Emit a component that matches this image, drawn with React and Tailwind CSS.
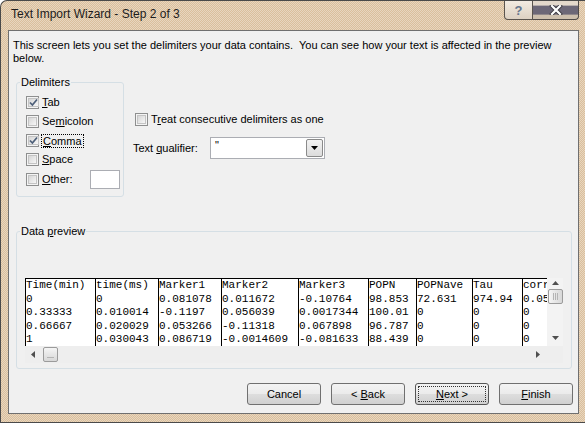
import React from "react";

// dithered tan window frame, like the basic theme
const frame =
  "bg-[#e0c8a8] bg-[repeating-conic-gradient(#dabf9c_0%_25%,#e8d6bf_0%_50%)] bg-[length:2px_2px]";

const columns = [
  { w: "w-[70px]", cells: ["Time(min)", "0", "0.33333", "0.66667", "1"] },
  { w: "w-[63px]", cells: ["time(ms)", "0", "0.010014", "0.020029", "0.030043"] },
  { w: "w-[63px]", cells: ["Marker1", "0.081078", "-0.1197", "0.053266", "0.086719"] },
  { w: "w-[77px]", cells: ["Marker2", "0.011672", "0.056039", "-0.11318", "-0.0014609"] },
  { w: "w-[70px]", cells: ["Marker3", "-0.10764", "0.0017344", "0.067898", "-0.081633"] },
  { w: "w-[48px]", cells: ["POPN", "98.853", "100.01", "96.787", "88.439"] },
  { w: "w-[56px]", cells: ["POPNave", "72.631", "0", "0", "0"] },
  { w: "w-[50px]", cells: ["Tau", "974.94", "0", "0", "0"] },
  { w: "w-[25px]", cells: ["corr", "0.05", "0", "0", "0"] },
];

const CheckBox = ({ checked }) => (
  <span className="w-[13px] h-[13px] shrink-0 border border-[#8e8f8f] bg-[#f4f4f4] p-[1px] flex">
    <span className="flex-1 border border-[#c4c4c4] bg-[linear-gradient(135deg,#d6d6d6,#f7f7f7)] flex items-center justify-center">
      {checked && (
        <svg width="9" height="9" viewBox="0 0 9 9">
          <path d="M1 4.5 L3.4 7 L8 1.5" stroke="#4c5e78" strokeWidth="1.7" fill="none" />
        </svg>
      )}
    </span>
  </span>
);

const CheckRow = ({ checked, children, focus }) => (
  <div className="h-[19px] flex items-center gap-[3px]">
    <CheckBox checked={checked} />
    <span className={focus ? "border border-dotted border-black leading-[12px] px-px -ml-px" : "leading-[13px]"}>
      {children}
    </span>
  </div>
);

const Arrow = ({ dir }) => {
  const d = {
    up: "M0 4 L3.5 0 L7 4 Z",
    down: "M0 0 L7 0 L3.5 4 Z",
  }[dir];
  const side = {
    left: "M4 0 L4 7 L0 3.5 Z",
    right: "M0 0 L4 3.5 L0 7 Z",
  }[dir];
  if (side)
    return (
      <svg width="4" height="7" viewBox="0 0 4 7">
        <path d={side} fill="#4f4f4f" />
      </svg>
    );
  return (
    <svg width="7" height="4" viewBox="0 0 7 4">
      <path d={d} fill="#4f4f4f" />
    </svg>
  );
};

const Thumb = ({ vertical }) => (
  <div
    className={`w-[15px] h-[15px] rounded-[2px] border border-[#9b9b9b] flex items-center justify-center ${
      vertical
        ? "bg-[linear-gradient(to_right,#f5f5f5,#e6e6e6_50%,#d8d8d8)]"
        : "bg-[linear-gradient(#f5f5f5,#e6e6e6_50%,#d8d8d8)]"
    }`}
  >
    {vertical ? (
      <div className="flex gap-[1px]">
        <span className="w-[1px] h-[7px] bg-[#b4b4b4]" />
        <span className="w-[1px] h-[7px] bg-[#b4b4b4]" />
        <span className="w-[1px] h-[7px] bg-[#b4b4b4]" />
      </div>
    ) : (
      <div className="flex flex-col gap-[1px] mt-[5px]">
        <span className="w-[7px] h-[1px] bg-[#b4b4b4]" />
      </div>
    )}
  </div>
);

const Button = ({ children, def }) => (
  <div
    className={`w-[74px] h-[22px] rounded-[3px] border ${
      def ? "border-[#555]" : "border-[#707070]"
    } bg-[linear-gradient(#f3f3f3_0%,#ebebeb_48%,#dddddd_52%,#d0d0d0_100%)] p-[2px] flex`}
  >
    <div
      className={`flex-1 flex items-center justify-center ${
        def ? "border border-dotted border-[#333]" : ""
      }`}
    >
      <span className="leading-[13px] whitespace-pre">{children}</span>
    </div>
  </div>
);

function TitleBar() {
  return (
    <div className="h-[29px] flex items-start shrink-0">
      <div className="pl-[10px] pt-[6px] text-[12px] leading-[14px] text-[#1c1c1c]">
        Text Import Wizard - Step 2 of 3
      </div>
      <div className="ml-auto mr-[6px] flex">
        <div className="w-[29px] h-[19px] border border-t-0 border-[#5a544e] rounded-bl-[4px] bg-[linear-gradient(#f2ebe2,#ddd1c2)] flex items-center justify-center text-[13px] font-bold text-[#66758d] leading-none">
          ?
        </div>
        <div className="w-[46px] h-[19px] border border-l-0 border-t-0 border-[#4f4a48] rounded-br-[4px] bg-[linear-gradient(#e3d8cb_0%,#e3d8cb_22%,#6c6777_30%,#6c6777_72%,#cdbfad_80%,#cdbfad_100%)] flex items-center justify-center">
          <svg width="14" height="10" viewBox="0 0 14 10">
            <path d="M3 1 L11 9 M11 1 L3 9" stroke="#3d3a40" strokeWidth="4" strokeLinecap="square" />
            <path d="M3 1 L11 9 M11 1 L3 9" stroke="#ffffff" strokeWidth="2.2" strokeLinecap="square" />
          </svg>
        </div>
      </div>
    </div>
  );
}

function Preview() {
  return (
    <div className="ml-[8px] mt-[46px] flex flex-col w-[538px]">
      <div className="flex h-[68px]">
        <div className="w-[522px] h-[68px] overflow-hidden bg-white border-t border-black flex font-['Liberation_Mono','Courier_New',monospace] text-[11px] leading-[13.5px] text-black">
          {columns.map((c) => (
            <div key={c.cells[0]} className={`${c.w} shrink-0 border-l border-black overflow-hidden`}>
              {c.cells.map((v, i) => (
                <div key={i} className="whitespace-pre">
                  {v}
                </div>
              ))}
            </div>
          ))}
        </div>
        <div className="w-[16px] bg-[#f3f3f3] flex flex-col items-center">
          <div className="h-[8px] pt-[1px] flex items-center">
            <Arrow dir="up" />
          </div>
          <div className="mt-[3px]">
            <Thumb vertical />
          </div>
          <div className="mt-auto mb-[6px] flex">
            <Arrow dir="down" />
          </div>
        </div>
      </div>
      <div className="flex h-[17px]">
        <div className="w-[522px] bg-[#eeeeee] flex items-center">
          <div className="ml-[6px] flex">
            <Arrow dir="left" />
          </div>
          <div className="ml-[8px]">
            <Thumb />
          </div>
          <div className="ml-auto mr-[7px] flex">
            <Arrow dir="right" />
          </div>
        </div>
        <div className="w-[16px] bg-[#eeeeee]" />
      </div>
    </div>
  );
}

export default function App() {
  return (
    <div
      className={`w-[585px] h-[423px] overflow-hidden border-l border-t border-b border-[#4a4a4a] rounded-tl-[7px] flex flex-col ${frame} font-['Liberation_Sans',Arial,sans-serif] text-[11px] text-black`}
    >
      <TitleBar />
      <div className="ml-[7px] w-[571px] h-[384px] shrink-0 border border-[#6f6f6f] bg-[#f0f0f0] flex flex-col">
        <div className="pl-[4px] pt-[8px] leading-[13px]">
          This screen lets you set the delimiters your data contains.{"\u00a0"} You can see how your text is
          affected in the preview
          <br />
          below.
        </div>

        <div className="mt-[17px] flex">
          <div className="relative ml-[7px] w-[108px] h-[115px] border border-[#d5dfe5] rounded-[3px] pl-[9px] pt-[10px] flex flex-col">
            <span className="absolute left-[3px] top-[-8px] bg-[#f0f0f0] px-px leading-[14px]">Delimiters</span>
            <CheckRow checked>
              <u>T</u>ab
            </CheckRow>
            <CheckRow>
              Se<u>m</u>icolon
            </CheckRow>
            <CheckRow checked focus>
              <u>C</u>omma
            </CheckRow>
            <CheckRow>
              <u>S</u>pace
            </CheckRow>
            <div className="h-[20px] flex items-center gap-[3px]">
              <CheckBox />
              <span className="w-[45px] leading-[13px]">
                <u>O</u>ther:
              </span>
              <div className="w-[30px] h-[19px] border border-[#abadb3] bg-white" />
            </div>
          </div>

          <div className="ml-[11px] flex flex-col">
            <div className="mt-[28px] h-[19px] flex items-center gap-[3px]">
              <CheckBox />
              <span className="leading-[13px]">
                T<u>r</u>eat consecutive delimiters as one
              </span>
            </div>
            <div className="mt-[8px] -ml-[2px] flex items-center">
              <span className="w-[77px] leading-[13px]">
                Text <u>q</u>ualifier:
              </span>
              <div className="w-[115px] h-[22px] border border-[#abadb3] bg-white flex items-stretch p-[1px]">
                <span className="flex-1 pl-[3px] leading-[12px]">"</span>
                <div className="w-[17px] border border-[#8a8a8a] rounded-[2px] bg-[linear-gradient(#f2f2f2,#dcdcdc)] flex items-center justify-center">
                  <svg width="7" height="4" viewBox="0 0 7 4">
                    <path d="M0 0 L7 0 L3.5 4 Z" fill="#000" />
                  </svg>
                </div>
              </div>
            </div>
          </div>
        </div>

        <div className="relative mt-[34px] ml-[7px] w-[556px] h-[138px] shrink-0 border border-[#d5dfe5] rounded-[3px] flex flex-col">
          <span className="absolute left-[3px] top-[-8px] bg-[#f0f0f0] px-px leading-[14px]">
            Data <u>p</u>review
          </span>
          <Preview />
        </div>

        <div className="mt-[14px] pr-[5px] flex justify-end gap-[10px]">
          <Button>Cancel</Button>
          <Button>
            &lt; <u>B</u>ack
          </Button>
          <Button def>
            <u>N</u>ext &gt;
          </Button>
          <Button>
            <u>F</u>inish
          </Button>
        </div>
      </div>
    </div>
  );
}
